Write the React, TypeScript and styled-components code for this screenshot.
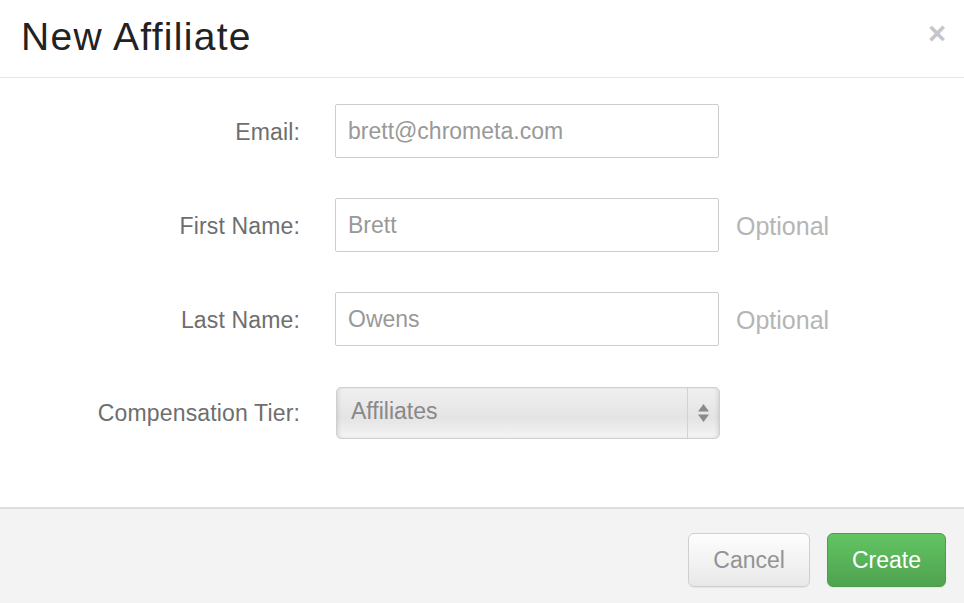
import React from 'react';
import styled, { createGlobalStyle } from 'styled-components';

const GlobalStyle = createGlobalStyle`
  html, body {
    margin: 0;
    padding: 0;
    background: #fff;
  }
  body {
    font-family: 'Liberation Sans', Arial, sans-serif;
  }
`;

const Modal = styled.div`
  width: 964px;
  height: 603px;
  display: flex;
  flex-direction: column;
  background: #fff;
  overflow: hidden;
`;

const Header = styled.header`
  height: 78px;
  box-sizing: border-box;
  border-bottom: 1px solid #e5e5e5;
  display: flex;
  align-items: center;
  justify-content: space-between;
  padding: 0 18px 0 21px;
`;

const Title = styled.h3`
  margin: 0;
  font-size: 39px;
  font-weight: normal;
  color: #222;
  letter-spacing: 1.3px;
  font-variant-ligatures: none;
  padding-bottom: 4px;
`;

const Close = styled.button`
  border: none;
  background: none;
  padding: 0;
  font-family: 'Liberation Sans', Arial, sans-serif;
  font-size: 31px;
  font-weight: bold;
  line-height: 1;
  color: #c6c6c6;
  margin-top: -10px;
  cursor: pointer;
`;

const Body = styled.div`
  flex: 1;
  padding: 26px 0 0;
  display: flex;
  flex-direction: column;
  gap: 40px;
`;

const Row = styled.div`
  display: grid;
  grid-template-columns: 300px 384px auto;
  column-gap: 35px;
  align-items: center;
`;

const Label = styled.label`
  text-align: right;
  font-size: 23px;
  color: #6e6e6e;
  letter-spacing: 0.15px;
  padding-top: 2px;
`;

const Input = styled.input`
  box-sizing: border-box;
  width: 384px;
  height: 54px;
  border: 1px solid #cdcdcd;
  border-radius: 2px;
  padding: 0 12px;
  font-family: 'Liberation Sans', Arial, sans-serif;
  font-size: 23px;
  color: #999;
  background: #fff;
  outline: none;
`;

const Hint = styled.span`
  font-size: 25px;
  color: #b5b5b5;
  margin-left: -18px;
  padding-top: 2px;
`;

const Select = styled.div`
  box-sizing: border-box;
  width: 384px;
  height: 52px;
  margin-left: 1px;
  margin-top: 1px;
  border: 1px solid #cfcfcf;
  border-radius: 5px;
  background: linear-gradient(#f0f0f0, #e4e4e4 60%, #f4f4f4);
  box-shadow: inset 3px 0 4px -2px rgba(0, 0, 0, 0.12), inset -3px 0 4px -2px rgba(0, 0, 0, 0.12);
  display: flex;
  align-items: stretch;
`;

const SelectValue = styled.span`
  flex: 1;
  display: flex;
  align-items: center;
  padding-left: 14px;
  padding-bottom: 3px;
  font-size: 23px;
  color: #888;
`;

const SelectArrows = styled.span`
  width: 31px;
  border-left: 1px solid #d2d2d2;
  display: flex;
  align-items: center;
  justify-content: center;
`;

const Footer = styled.footer`
  height: 96px;
  box-sizing: border-box;
  border-top: 2px solid #dedede;
  background: #f3f3f3;
  display: flex;
  align-items: center;
  justify-content: flex-end;
  gap: 17px;
  padding: 8px 18px 0 0;
`;

const Button = styled.button<{ primary?: boolean }>`
  box-sizing: border-box;
  height: 54px;
  padding: 0 ${p => (p.primary ? '24px' : '24px')};
  border-radius: 6px;
  font-family: 'Liberation Sans', Arial, sans-serif;
  font-size: 23px;
  cursor: pointer;
  border: 1px solid ${p => (p.primary ? '#4b9e4b' : '#cfcfcf')};
  color: ${p => (p.primary ? '#fff' : '#939393')};
  background: ${p =>
    p.primary
      ? 'linear-gradient(#62c462, #4fa34f)'
      : 'linear-gradient(#fefefe, #e8e8e8)'};
  box-shadow: 0 1px 1px rgba(0, 0, 0, 0.06);
`;

const fields = [
  { label: 'Email:', value: 'brett@chrometa.com', optional: false },
  { label: 'First Name:', value: 'Brett', optional: true },
  { label: 'Last Name:', value: 'Owens', optional: true },
];

export default function App() {
  return (
    <>
      <GlobalStyle />
      <Modal>
        <Header>
          <Title>New Affiliate</Title>
          <Close aria-label="Close">×</Close>
        </Header>
        <Body>
          {fields.map(f => (
            <Row key={f.label}>
              <Label>{f.label}</Label>
              <Input defaultValue={f.value} />
              {f.optional && <Hint>Optional</Hint>}
            </Row>
          ))}
          <Row>
            <Label>Compensation Tier:</Label>
            <Select>
              <SelectValue>Affiliates</SelectValue>
              <SelectArrows>
                <svg width="11" height="20" viewBox="0 0 11 20">
                  <path d="M5.5 1 L11 8.5 H0 Z" fill="#8a8a8a" />
                  <path d="M5.5 19 L11 11.5 H0 Z" fill="#8a8a8a" />
                </svg>
              </SelectArrows>
            </Select>
          </Row>
        </Body>
        <Footer>
          <Button>Cancel</Button>
          <Button primary>Create</Button>
        </Footer>
      </Modal>
    </>
  );
}
